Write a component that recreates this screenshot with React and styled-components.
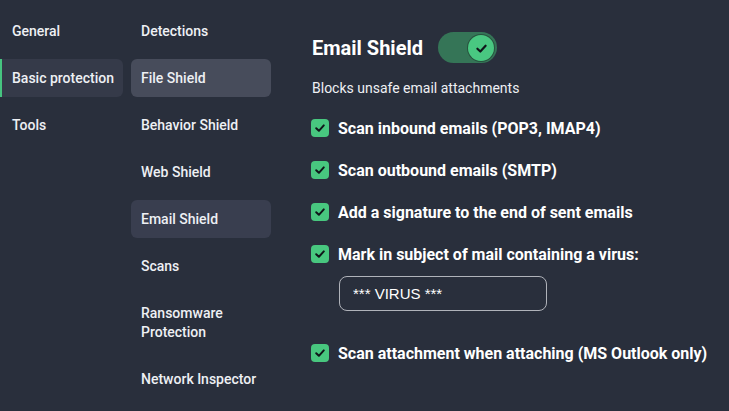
import React, { useState } from "react";
import styled, { createGlobalStyle } from "styled-components";

const GlobalStyle = createGlobalStyle`
  html, body {
    margin: 0;
    padding: 0;
    background: rgb(41, 47, 60);
  }
  * {
    box-sizing: border-box;
  }
`;

const Page = styled.div`
  display: flex;
  height: 411px;
  width: 729px;
  overflow: hidden;
  background: rgb(41, 47, 60);
  font-family: Roboto, "Liberation Sans", sans-serif;
  color: #ffffff;
`;

const NavColumn = styled.nav`
  display: flex;
  flex-direction: column;
  gap: 9px;
  width: ${(p) => p.$width}px;
  margin-left: ${(p) => p.$left || 0}px;
  padding-top: 12px;
  flex-shrink: 0;
`;

const NavItem = styled.div`
  position: relative;
  min-height: 38px;
  padding: 9.5px ${(p) => p.$pad}px;
  line-height: 19px;
  font-size: 14px;
  font-weight: 500;
  color: #eef0f4;
  white-space: ${(p) => (p.$nowrap ? "nowrap" : "normal")};
  border-radius: ${(p) => (p.$edge ? "0 6px 6px 0" : "6px")};
  background: ${(p) => p.$bg || "transparent"};

  ${(p) =>
    p.$edge &&
    `
    &::before {
      content: "";
      position: absolute;
      left: 0;
      top: 0;
      bottom: 0;
      width: 2px;
      background: rgb(70, 196, 128);
    }
  `}
`;

const Panel = styled.section`
  flex: 1;
  padding: 32px 0 0 41px;
`;

const Header = styled.div`
  display: flex;
  align-items: center;
  gap: 15px;
  height: 31px;
`;

const Title = styled.h1`
  margin: 0;
  font-size: 20px;
  font-weight: 700;
  color: #ffffff;
`;

const Toggle = styled.button`
  position: relative;
  width: 59px;
  height: 31px;
  border: none;
  padding: 0;
  border-radius: 16px;
  background: rgb(53, 117, 87);
  cursor: pointer;
`;

const Knob = styled.span`
  position: absolute;
  top: 3px;
  right: 3px;
  width: 26px;
  height: 26px;
  border-radius: 50%;
  background: rgb(73, 200, 129);
  box-shadow: 0 0 0 1px rgba(30, 60, 45, 0.6);
  display: flex;
  align-items: center;
  justify-content: center;
`;

const Subtitle = styled.p`
  margin: 16px 0 0;
  font-size: 14px;
  line-height: 18px;
  color: #eef0f4;
`;

const Options = styled.div`
  display: flex;
  flex-direction: column;
  margin-top: 19px;
`;

const OptionRow = styled.label`
  display: flex;
  align-items: center;
  gap: 9px;
  height: 24px;
  margin-top: ${(p) => p.$gap || 0}px;
  font-size: 16px;
  font-weight: 700;
  color: #ffffff;
  cursor: pointer;
`;

const Box = styled.span`
  width: 18px;
  height: 18px;
  margin-left: -1px;
  border-radius: 4px;
  background: rgb(72, 199, 127);
  display: flex;
  align-items: center;
  justify-content: center;
  flex-shrink: 0;
`;

const TextInput = styled.input`
  width: 208px;
  height: 35px;
  margin: 10px 0 0 27px;
  padding: 0 13px;
  border: 1px solid rgb(176, 179, 186);
  border-radius: 8px;
  background: transparent;
  color: #ffffff;
  font-family: "Liberation Sans", Arial, sans-serif;
  font-size: 15px;
  outline: none;
`;

const Tick = ({ size = 12 }) => (
  <svg width={size} height={size} viewBox="0 0 12 12" fill="none">
    <path
      d="M2.2 6.2 L4.9 8.8 L9.8 3.4"
      stroke="#10161a"
      strokeWidth="2"
      strokeLinecap="round"
      strokeLinejoin="round"
    />
  </svg>
);

const mainNav = ["General", "Basic protection", "Tools"];

const subNav = [
  "Detections",
  "File Shield",
  "Behavior Shield",
  "Web Shield",
  "Email Shield",
  "Scans",
  "Ransomware Protection",
  "Network Inspector",
];

const options = [
  "Scan inbound emails (POP3, IMAP4)",
  "Scan outbound emails (SMTP)",
  "Add a signature to the end of sent emails",
  "Mark in subject of mail containing a virus:",
];

const Checkbox = ({ label, gap }) => (
  <OptionRow $gap={gap}>
    <Box>
      <Tick />
    </Box>
    {label}
  </OptionRow>
);

export default function App() {
  const [subject, setSubject] = useState("*** VIRUS ***");

  return (
    <>
      <GlobalStyle />
      <Page>
        <NavColumn $width={123}>
          {mainNav.map((item) => (
            <NavItem
              key={item}
              $pad={12}
              $nowrap
              $edge={item === "Basic protection"}
              $bg={item === "Basic protection" ? "rgb(53, 58, 73)" : null}
            >
              {item}
            </NavItem>
          ))}
        </NavColumn>

        <NavColumn $width={140} $left={8}>
          {subNav.map((item) => (
            <NavItem
              key={item}
              $pad={10}
              $bg={
                item === "File Shield"
                  ? "rgb(71, 76, 91)"
                  : item === "Email Shield"
                  ? "rgb(57, 62, 79)"
                  : null
              }
            >
              {item}
            </NavItem>
          ))}
        </NavColumn>

        <Panel>
          <Header>
            <Title>Email Shield</Title>
            <Toggle aria-label="Email Shield on">
              <Knob>
                <Tick size={13} />
              </Knob>
            </Toggle>
          </Header>
          <Subtitle>Blocks unsafe email attachments</Subtitle>

          <Options>
            {options.map((label, i) => (
              <Checkbox key={label} label={label} gap={i ? 18 : 0} />
            ))}
            <TextInput
              value={subject}
              onChange={(e) => setSubject(e.target.value)}
            />
            <Checkbox
              label="Scan attachment when attaching (MS Outlook only)"
              gap={30}
            />
          </Options>
        </Panel>
      </Page>
    </>
  );
}
